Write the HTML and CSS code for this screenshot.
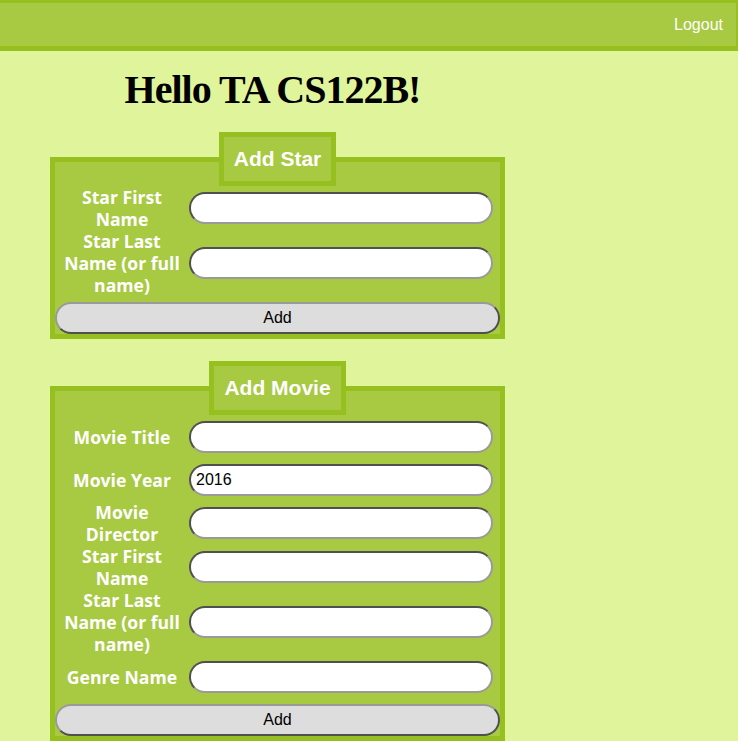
FILE: index.html
```html
<!DOCTYPE html>
<html>
<head>
<meta charset="utf-8">
<title>Dashboard</title>
<link rel="stylesheet" href="styles.css">
</head>
<body>
<header class="topbar">
  <a class="logout" href="#">Logout</a>
</header>
<main class="content">
  <h1 class="greeting">Hello TA CS122B!</h1>

  <form class="panel">
    <fieldset class="box">
      <legend class="box-title">Add Star</legend>
      <div class="row">
        <label class="field-label">Star First<br>Name</label>
        <input class="field-input" type="text">
      </div>
      <div class="row">
        <label class="field-label">Star Last<br>Name (or full<br>name)</label>
        <input class="field-input" type="text">
      </div>
      <button class="submit" type="button">Add</button>
    </fieldset>
  </form>

  <form class="panel">
    <fieldset class="box">
      <legend class="box-title">Add Movie</legend>
      <div class="row">
        <label class="field-label">Movie Title</label>
        <input class="field-input" type="text">
      </div>
      <div class="row">
        <label class="field-label">Movie Year</label>
        <input class="field-input" type="text" value="2016">
      </div>
      <div class="row">
        <label class="field-label">Movie<br>Director</label>
        <input class="field-input" type="text">
      </div>
      <div class="row">
        <label class="field-label">Star First<br>Name</label>
        <input class="field-input" type="text">
      </div>
      <div class="row">
        <label class="field-label">Star Last<br>Name (or full<br>name)</label>
        <input class="field-input" type="text">
      </div>
      <div class="row">
        <label class="field-label">Genre Name</label>
        <input class="field-input" type="text">
      </div>
      <button class="submit" type="button">Add</button>
    </fieldset>
  </form>
</main>
</body>
</html>
```

FILE: styles.css
```css
html, body {
  margin: 0;
  padding: 0;
  background: #e0f59b;
}

body {
  font-family: "Liberation Sans", Arial, sans-serif;
}

.topbar {
  display: flex;
  align-items: center;
  justify-content: flex-end;
  height: 43px;
  background: #a8c942;
  border-top: 3px solid #96bf20;
  border-bottom: 5px solid #96bf20;
  border-right: 2px solid #96bf20;
  padding-right: 13px;
}

.logout {
  color: #ffffff;
  text-decoration: none;
  font-size: 16px;
}

.content {
  width: 529px;
  margin-left: 8px;
}

.greeting {
  margin: 16px 0 19px;
  text-align: center;
  font-family: "Liberation Serif", "Times New Roman", serif;
  font-weight: bold;
  font-size: 40px;
  line-height: 46px;
  letter-spacing: -1px;
  color: #000;
}

.panel {
  margin: 0 0 22px 42px;
  width: 455px;
}

.box {
  margin: 0;
  padding: 0;
  min-width: 0;
  background: #a8c942;
  border: 5px solid #96bf20;
}

.box-title {
  margin: 0 auto;
  padding: 10px 10px;
  background: #a8c942;
  border: 5px solid #96bf20;
  color: #ffffff;
  font-weight: bold;
  font-size: 21px;
  line-height: 24px;
}

.row {
  display: flex;
  align-items: center;
  min-height: 43px;
}

.field-label {
  width: 134px;
  flex: none;
  text-align: center;
  color: #ffffff;
  font-family: "Open Sans", "DejaVu Sans", sans-serif;
  font-weight: 700;
  font-size: 17.6px;
  line-height: 22px;
  white-space: nowrap;
}

.field-input {
  box-sizing: border-box;
  width: 304px;
  height: 32px;
  margin: 0;
  padding: 0 5px;
  border: 2px solid;
  border-color: #505050 #9a9a9a #9a9a9a #505050;
  border-radius: 16px;
  background: #ffffff;
  font-family: "Liberation Sans", Arial, sans-serif;
  font-size: 16px;
  color: #000;
  outline: none;
}

.submit {
  display: block;
  box-sizing: border-box;
  width: 100%;
  height: 32px;
  margin: 6px 0 0;
  padding: 0;
  border: 2px solid;
  border-color: #9a9a9a #505050 #505050 #9a9a9a;
  border-radius: 16px;
  background: #dddddd;
  font-family: "Liberation Sans", Arial, sans-serif;
  font-size: 16px;
  color: #000;
}
```
